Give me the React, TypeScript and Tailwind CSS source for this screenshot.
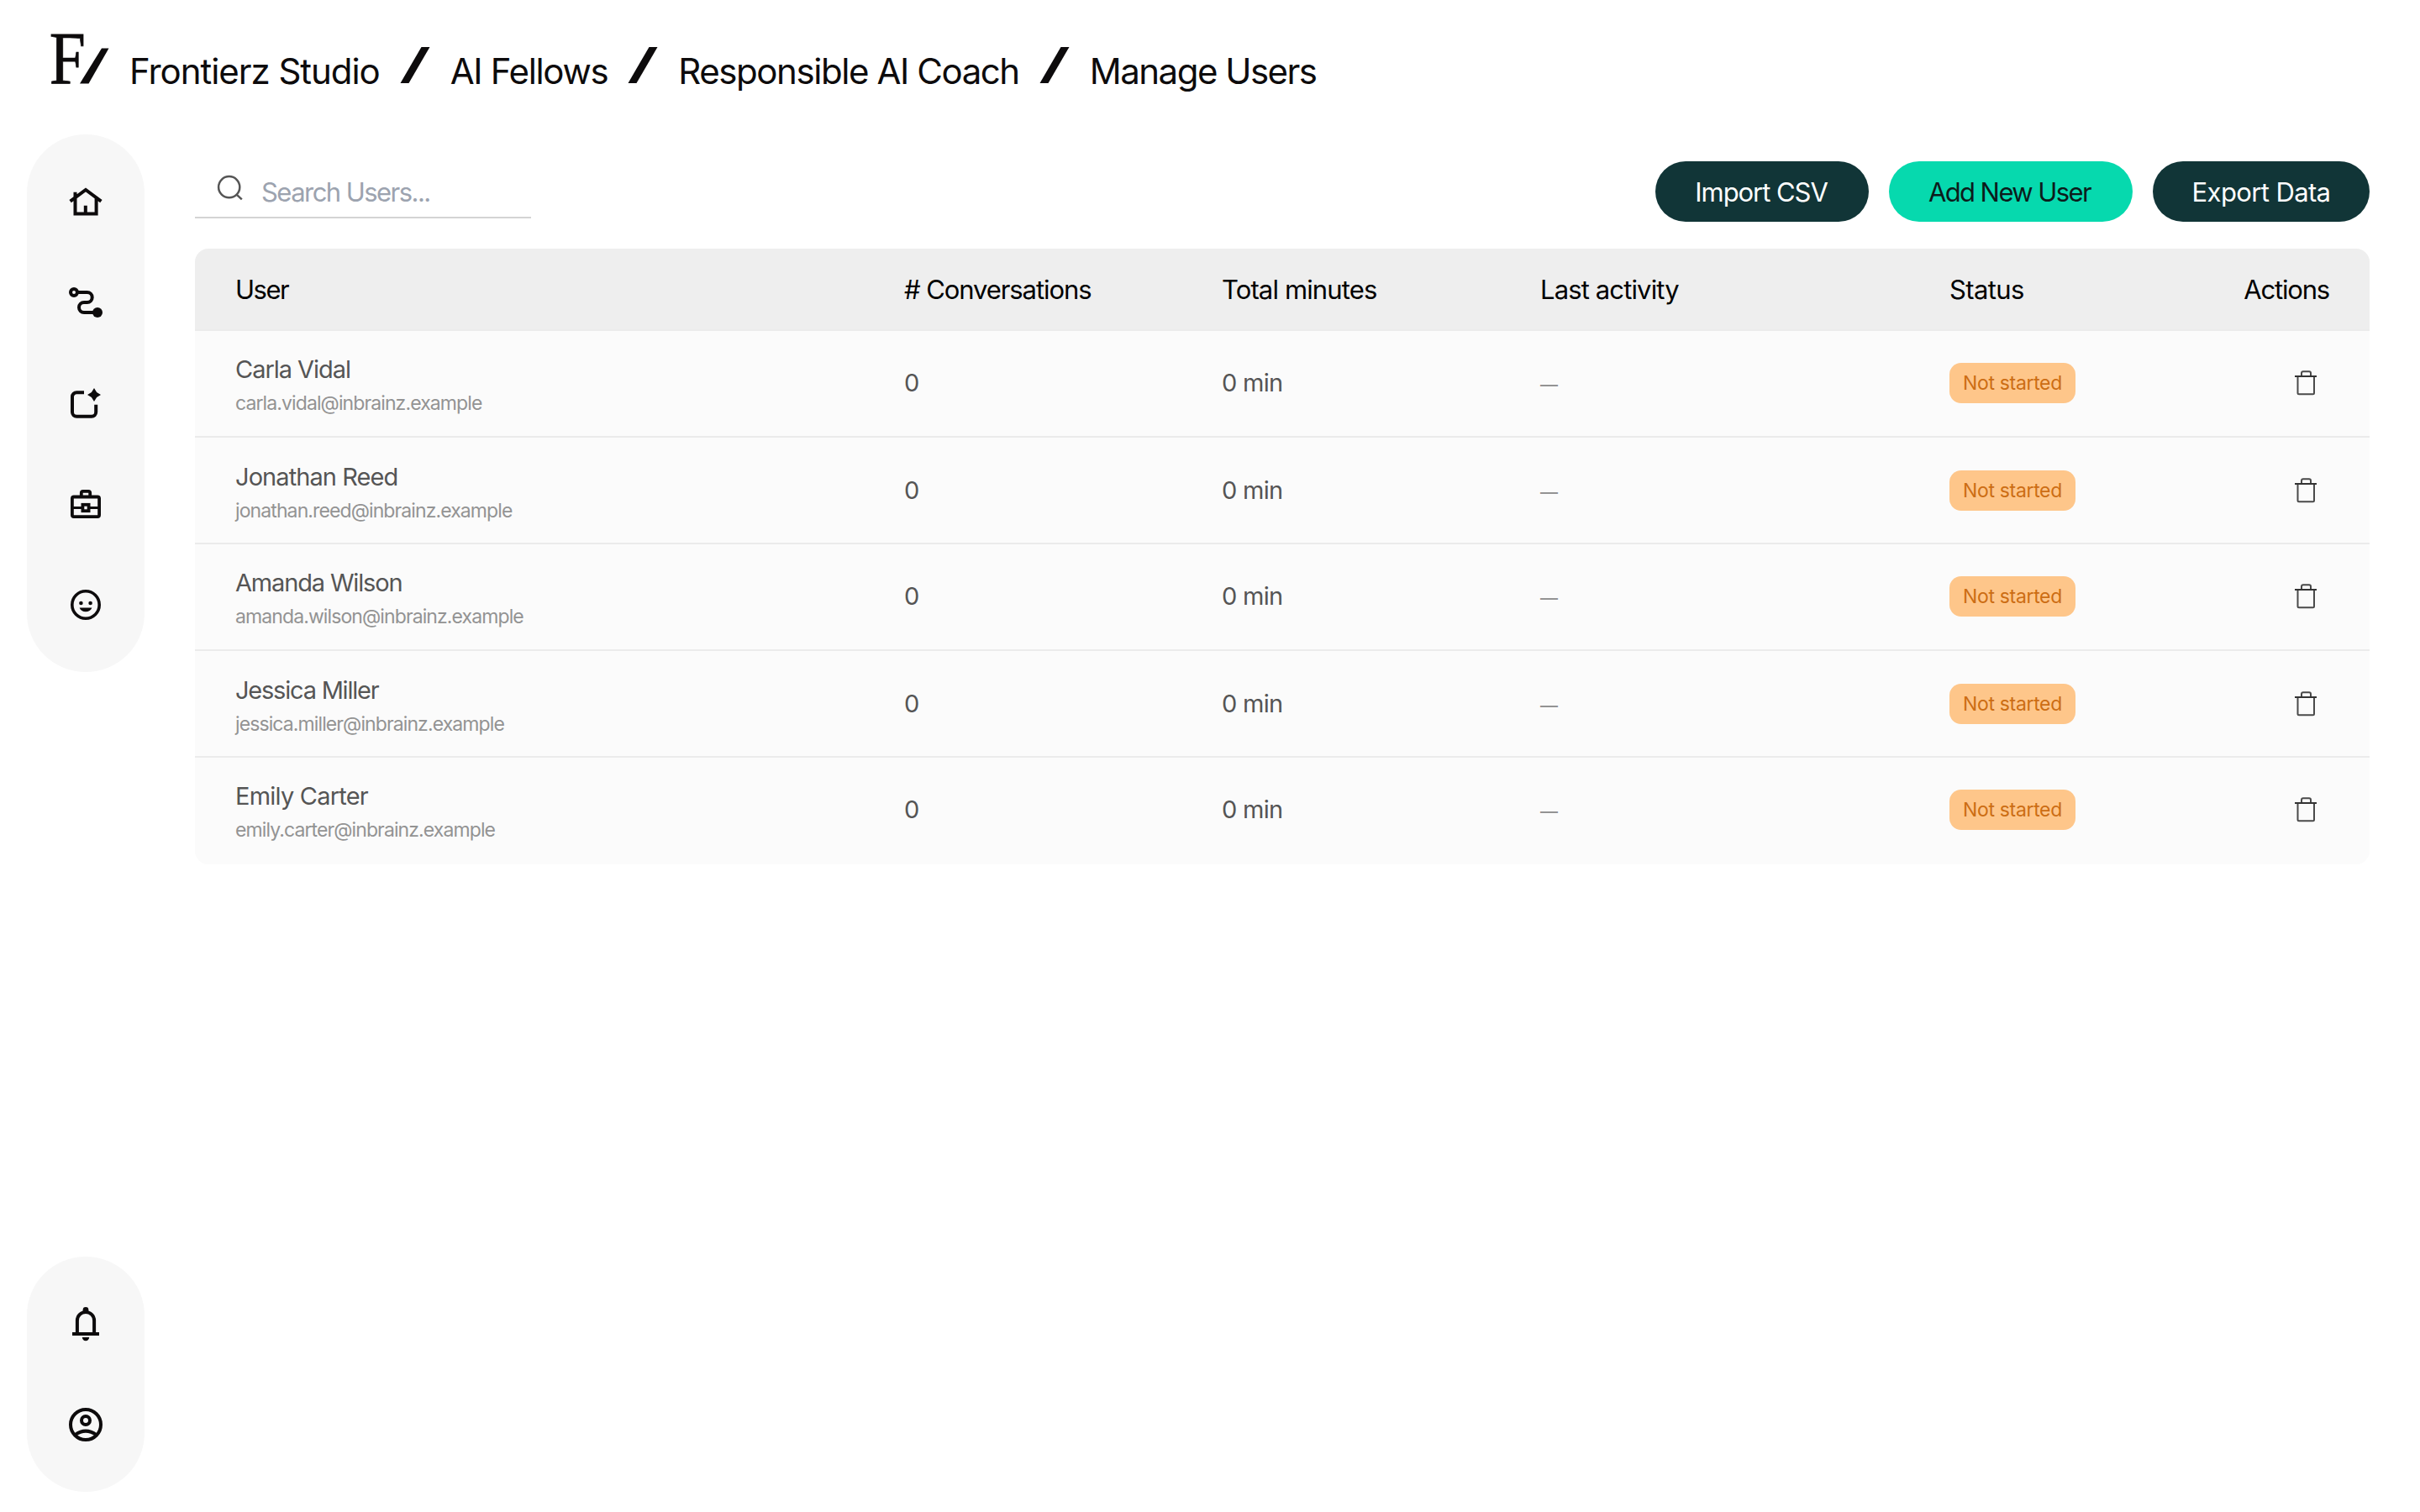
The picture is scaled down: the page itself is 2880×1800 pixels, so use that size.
import { useState } from 'react';
import clsx from 'clsx';

const crumbs = [
  { label: 'Frontierz Studio', tracking: 'tracking-[-0.025em]' },
  { label: 'AI Fellows', tracking: 'tracking-[-0.032em]' },
  { label: 'Responsible AI Coach', tracking: 'tracking-[-0.034em]' },
  { label: 'Manage Users', tracking: 'tracking-[-0.036em]' },
];

const users = [
  { name: 'Carla Vidal', email: 'carla.vidal@inbrainz.example', tracking: 'tracking-[-0.036em]' },
  { name: 'Jonathan Reed', email: 'jonathan.reed@inbrainz.example', tracking: 'tracking-[-0.032em]' },
  { name: 'Amanda Wilson', email: 'amanda.wilson@inbrainz.example', tracking: 'tracking-[-0.040em]' },
  { name: 'Jessica Miller', email: 'jessica.miller@inbrainz.example', tracking: 'tracking-[-0.042em]' },
  { name: 'Emily Carter', email: 'emily.carter@inbrainz.example', tracking: 'tracking-[-0.027em]' },
];

const iconProps = {
  viewBox: '0 0 24 24',
  className: 'size-12',
  fill: 'none',
  stroke: 'currentColor',
  strokeWidth: 2,
};

const Logo = () => (
  <svg viewBox="0 -22 70 82" className="w-[70px] h-[82px] shrink-0 overflow-visible">
    <text x="-1.5" y="59" fontSize="89" fontFamily="Liberation Serif, serif" fill="#0d0b0c" stroke="#0d0b0c" strokeWidth="0.8" transform="scale(0.87 1)">F</text>
    <path d="M35 59.5 61 17.5h8.5L45.5 59.5z" fill="#0d0b0c" />
  </svg>
);

const Slash = () => (
  <svg viewBox="0 0 36 44" className="w-9 h-11 shrink-0">
    <path d="M0.5 43 25.5 0h10L10.5 43z" fill="#0d0b0c" />
  </svg>
);

const HomeIcon = () => (
  <svg {...iconProps}>
    <path d="M5.75 6.4v12.8h12.55V9M2.8 11.8 12 5l9.2 6.8M11.9 19V14.4" />
  </svg>
);

const RouteIcon = () => (
  <svg {...iconProps}>
    <circle cx="5" cy="6" r="2" />
    <path d="M7 6h5.85a3 3 0 0 1 0 6H11a3 3 0 0 0 0 6h6" />
    <circle cx="19" cy="18" r="3" fill="currentColor" stroke="none" />
  </svg>
);

const SparkleBoxIcon = () => (
  <svg {...iconProps}>
    <path d="M11 5.6H6.6A2.6 2.6 0 0 0 4 8.2v9.1a2.6 2.6 0 0 0 2.6 2.6h8.9a2.6 2.6 0 0 0 2.6-2.6V12.9" />
    <path d="M17 3l1.55 2.45L21 7l-2.45 1.55L17 11l-1.55-2.45L13 7l2.45-1.55z" fill="currentColor" stroke="none" />
  </svg>
);

const BriefcaseIcon = () => (
  <svg {...iconProps} strokeWidth={1.9}>
    <rect x="3.95" y="7.75" width="16.1" height="11.8" rx="1" />
    <path d="M9.4 7.7V5.4a1 1 0 0 1 1-1h3.2a1 1 0 0 1 1 1v2.3" />
    <path d="M4 14.3h5.5M14.5 14.3H20" strokeWidth={1.5} />
    <rect x="10.2" y="12.4" width="3.6" height="3.7" />
  </svg>
);

const SmileIcon = () => (
  <svg {...iconProps} strokeWidth={1.8}>
    <circle cx="12" cy="12" r="8.1" />
    <g fill="currentColor" stroke="none">
      <circle cx="9.2" cy="11" r="1.15" />
      <circle cx="14.8" cy="11" r="1.15" />
      <path d="M8.3 13.7h7.4c-.5 1.5-2 2.4-3.7 2.4s-3.2-.9-3.7-2.4z" />
    </g>
  </svg>
);

const BellIcon = () => (
  <svg {...iconProps}>
    <path d="M4 18h16" />
    <path d="M6.95 18v-8a5.05 5.05 0 0 1 10.1 0v8" />
    <g fill="currentColor" stroke="none">
      <path d="M10.3 5V3.7a1.7 1.7 0 0 1 3.4 0V5z" />
      <path d="M9.9 20h4.2a2.1 2.1 0 0 1-4.2 0z" />
    </g>
  </svg>
);

const AccountIcon = () => (
  <svg {...iconProps}>
    <circle cx="12" cy="12" r="9" />
    <circle cx="12" cy="9.5" r="2.5" />
    <path d="M5.7 18.1Q12 13.5 18.3 18.1" />
  </svg>
);

const SearchIcon = () => (
  <svg viewBox="0 0 40 40" className="size-10 shrink-0" fill="none" stroke="#555" strokeWidth="2.5">
    <circle cx="20.7" cy="20.7" r="12.6" />
    <path d="M29.8 29.8 35.8 35.3" />
  </svg>
);

const TrashIcon = () => (
  <svg viewBox="0 0 32 32" className="size-8" fill="none" stroke="#4a4a4a" strokeWidth="2">
    <path d="M6.5 8v19.8a1.5 1.5 0 0 0 1.5 1.5h16.5a1.5 1.5 0 0 0 1.5-1.5V8" />
    <path d="M11 8V4.3a2 2 0 0 1 2-2h7a2 2 0 0 1 2 2V8" />
    <path d="M3 8h26" stroke="#333" />
  </svg>
);

const App = () => {
  const [query, setQuery] = useState('');
  const shown = users.filter((u) => (u.name + u.email).toLowerCase().includes(query.toLowerCase()));

  return (
    <div className="h-[1800px] w-[2880px] flex flex-col bg-white font-['Inter',sans-serif] text-[#0d0b0c]">
      <header className="h-40 shrink-0 flex items-baseline gap-6 pl-[60px] pt-[18px]">
        <Logo />
        {crumbs.map((crumb, i) => (
          <div key={crumb.label} className="flex items-baseline gap-6">
            {i > 0 && <Slash />}
            <span className={clsx('text-[42px] leading-[48px] whitespace-nowrap', crumb.tracking)}>{crumb.label}</span>
          </div>
        ))}
      </header>

      <div className="flex-1 flex pl-8 pr-[60px] pb-6">
        <aside className="w-[140px] shrink-0 flex flex-col justify-between">
          <nav className="flex flex-col items-center gap-[72px] rounded-[70px] bg-[#f7f7f7] py-14">
            <HomeIcon />
            <RouteIcon />
            <SparkleBoxIcon />
            <BriefcaseIcon />
            <SmileIcon />
          </nav>
          <nav className="flex flex-col items-center gap-[72px] rounded-[70px] bg-[#f7f7f7] py-14">
            <BellIcon />
            <AccountIcon />
          </nav>
        </aside>

        <main className="flex-1 ml-[60px] pt-8">
          <div className="h-[72px] flex items-center justify-between">
            <div className="w-[400px] h-16 flex items-start gap-[19px] border-b-2 border-[#d4d4d4] pl-5 pt-1.5">
              <SearchIcon />
              <input
                className="w-72 h-[53px] text-[31px] tracking-[-0.05em] outline-none placeholder:text-[#9ca3af]"
                placeholder="Search Users..."
                value={query}
                onChange={(e) => setQuery(e.target.value)}
              />
            </div>
            <div className="flex gap-6 text-[31px] *:h-[72px] *:rounded-full *:pt-0.5">
              <button className="w-[254px] pr-0.5 bg-[#113537] text-white tracking-[-0.034em]">Import CSV</button>
              <button className="w-[290px] pr-[3px] bg-[#06d9ae] text-[#0c1c1c] tracking-[-0.051em]">Add New User</button>
              <button className="w-[258px] bg-[#113537] text-white tracking-[-0.020em]">Export Data</button>
            </div>
          </div>

          <div className="mt-8 rounded-2xl overflow-hidden bg-[#fbfbfb]">
            <div className="h-[98px] grid grid-cols-[796px_378px_379px_487px_256px_1fr] items-center bg-[#eeeeee] border-b-2 border-[#ebebeb] pt-0.5 text-[31px] text-black whitespace-nowrap *:pl-12">
              <div className="tracking-[-0.048em]">User</div>
              <div className="tracking-[-0.035em]"># Conversations</div>
              <div className="tracking-[-0.028em]">Total minutes</div>
              <div className="tracking-[-0.028em]">Last activity</div>
              <div className="tracking-[-0.020em]">Status</div>
              <div className="justify-self-end pr-12 tracking-[-0.038em]">Actions</div>
            </div>
            <div>
              {shown.map((user) => (
                <div
                  key={user.email}
                  className="h-[127px] grid grid-cols-[796px_378px_379px_487px_256px_1fr] items-center border-b-2 border-[#ebebeb] last:border-[#fbfbfb] odd:pb-px even:pt-px text-[29px] text-[#555] *:pl-12"
                >
                  <div className="pt-2">
                    <p className={clsx('leading-10', user.tracking)}>{user.name}</p>
                    <p className="text-[23px] leading-[41px] tracking-[-0.039em] text-[#939393]">{user.email}</p>
                  </div>
                  <div>0</div>
                  <div className="tracking-[-0.025em]">0 min</div>
                  <div className="pt-[3px] text-[21px] font-medium text-[#939393]">—</div>
                  <div className="flex">
                    <span className="inline-flex w-[150px] h-12 items-center justify-center rounded-[14px] bg-[#fec68a] text-[23px] tracking-[-0.015em] text-[#cc6d14]">
                      Not started
                    </span>
                  </div>
                  <div className="flex justify-end pr-12">
                    <button className="px-3 py-2" aria-label="Delete user">
                      <TrashIcon />
                    </button>
                  </div>
                </div>
              ))}
            </div>
          </div>
        </main>
      </div>
    </div>
  );
};

export default App;
